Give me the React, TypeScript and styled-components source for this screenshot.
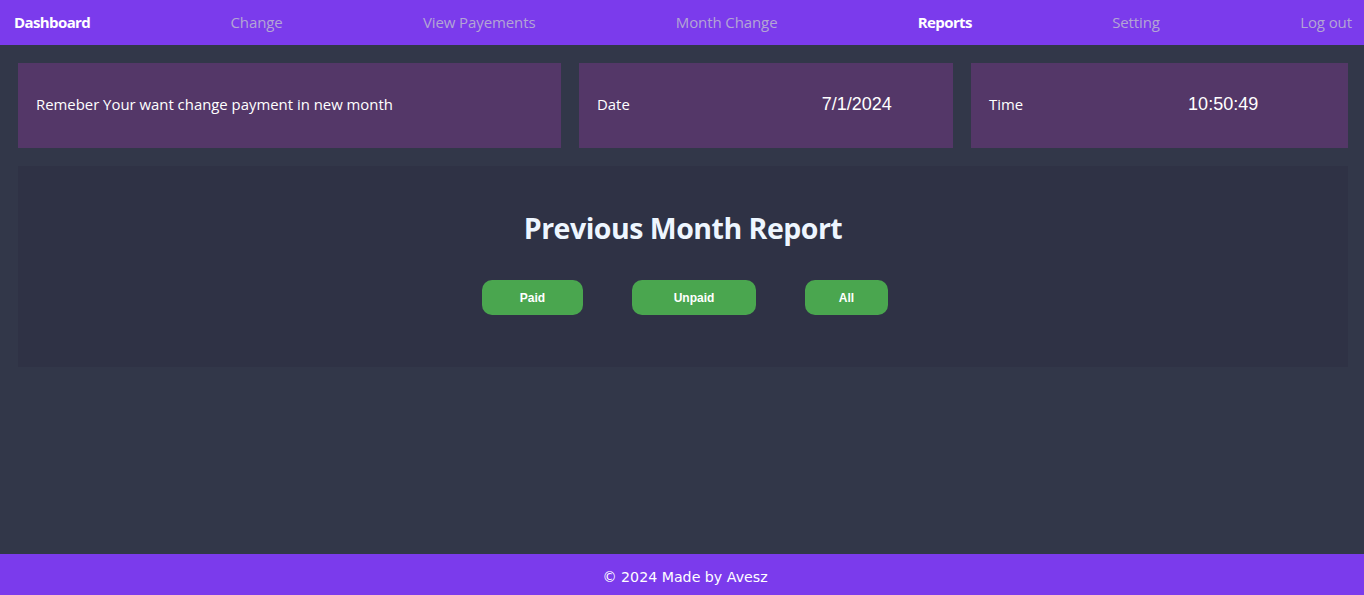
import React from "react";
import styled, { createGlobalStyle } from "styled-components";

const GlobalStyle = createGlobalStyle`
  html, body { margin: 0; padding: 0; background: #323749; }
  * { box-sizing: border-box; }
`;

const Page = styled.div`
  min-height: 100vh;
  display: flex;
  flex-direction: column;
  background: #323749;
  font-family: "Open Sans", "Noto Sans", sans-serif;
`;

const NavBar = styled.nav`
  height: 45px;
  background: #7b3bec;
  display: flex;
  align-items: center;
  justify-content: space-between;
  padding: 0 12px 2px 14px;
`;

const NavLink = styled.a<{ $active?: boolean }>`
  font-size: 15px;
  text-decoration: none;
  color: ${(p) => (p.$active ? "#ffffff" : "#b3a5d4")};
  font-weight: ${(p) => (p.$active ? 700 : 400)};
  letter-spacing: ${(p) => (p.$active ? "-0.6px" : "-0.1px")};
  cursor: pointer;
`;

const Main = styled.main`
  flex: 1;
  padding: 18px 16px 18px 18px;
  display: flex;
  flex-direction: column;
  gap: 18px;
`;

const CardRow = styled.div`
  display: grid;
  grid-template-columns: 543px 374px 1fr;
  gap: 18px;
`;

const Card = styled.div`
  height: 85px;
  background: #543768;
  display: flex;
  align-items: center;
  padding: 0 18px 4px;
  color: #ffffff;
  font-size: 14.9px;
`;

const Label = styled.span`
  font-size: 14.9px;
  color: #ffffff;
`;

const Value = styled.span<{ $offset: number }>`
  margin-left: ${(p) => p.$offset}px;
  padding-top: 2px;
  font-family: "Liberation Sans", Arial, sans-serif;
  font-size: 18px;
  color: #ffffff;
`;

const ReportPanel = styled.section`
  height: 201px;
  background: #2f3245;
  display: flex;
  flex-direction: column;
  align-items: center;
  padding-top: 43px;
`;

const Title = styled.h1`
  margin: 0;
  font-size: 28.5px;
  font-weight: 700;
  color: #eef6ff;
  letter-spacing: -0.5px;
`;

const ButtonRow = styled.div`
  display: flex;
  gap: 49px;
  margin-top: 33px;
  padding-left: 4px;
`;

const FilterButton = styled.button<{ $width: number }>`
  width: ${(p) => p.$width}px;
  height: 35px;
  padding: 0;
  border: none;
  border-radius: 10px;
  background: #4aa64f;
  color: #ffffff;
  font-family: "Liberation Sans", Arial, sans-serif;
  font-weight: 700;
  font-size: 12px;
  cursor: pointer;
`;

const Footer = styled.footer`
  height: 41px;
  background: #7b3bec;
  display: flex;
  align-items: center;
  justify-content: center;
  padding: 4px 0 0 6px;
  color: #ffffff;
  font-family: "DejaVu Sans", Verdana, sans-serif;
  font-size: 14.2px;
`;

export default function App() {
  const links = [
    { label: "Dashboard", active: true },
    { label: "Change" },
    { label: "View Payements" },
    { label: "Month Change" },
    { label: "Reports", active: true },
    { label: "Setting" },
    { label: "Log out" },
  ];
  return (
    <>
      <GlobalStyle />
      <Page>
        <NavBar>
          {links.map((l) => (
            <NavLink key={l.label} $active={l.active}>
              {l.label}
            </NavLink>
          ))}
        </NavBar>
        <Main>
          <CardRow>
            <Card>Remeber Your want change payment in new month</Card>
            <Card>
              <Label>Date</Label>
              <Value $offset={192}>7/1/2024</Value>
            </Card>
            <Card>
              <Label>Time</Label>
              <Value $offset={165}>10:50:49</Value>
            </Card>
          </CardRow>
          <ReportPanel>
            <Title>Previous Month Report</Title>
            <ButtonRow>
              <FilterButton $width={101}>Paid</FilterButton>
              <FilterButton $width={124}>Unpaid</FilterButton>
              <FilterButton $width={83}>All</FilterButton>
            </ButtonRow>
          </ReportPanel>
        </Main>
        <Footer>© 2024 Made by Avesz</Footer>
      </Page>
    </>
  );
}
